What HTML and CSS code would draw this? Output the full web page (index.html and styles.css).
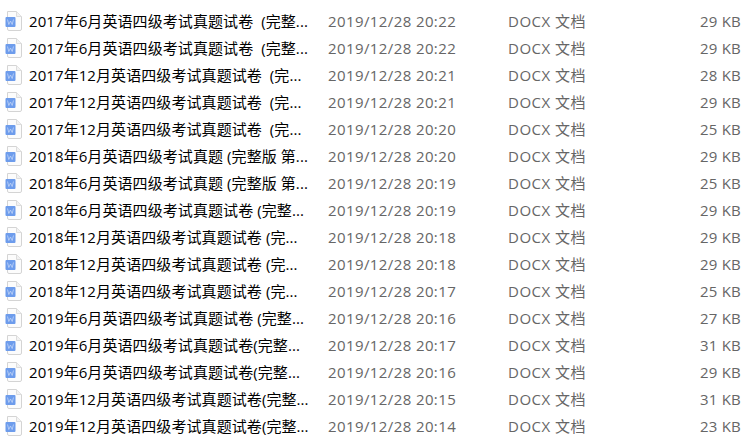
FILE: index.html
```html
<!DOCTYPE html>
<html lang="zh-CN">
    <head>
        <meta charset="UTF-8">
        <title>文件列表</title>
        <link rel="stylesheet" href="styles.css">
    </head>
    <body>
        <svg class="defs" width="0" height="0">
            <symbol id="doc" viewBox="0 0 17 20">
                <path d="M2.5 .5H11.5L16.5 5.5V18A1.5 1.5 0 0 1 15 19.5H4A1.5 1.5 0 0 1 2.5 18Z" fill="#fcfcfc" stroke="#d4d4d4"/>
                <path d="M11.5 .5V5.5H16.5" fill="#f2f2f2" stroke="#dddddd"/>
                <rect x="0.5" y="6" width="10" height="10" rx="1" fill="#6d9cec"/>
                <path d="M2.5 8.5L3.8 13.5L5.5 10L7.2 13.5L8.5 8.5" fill="none" stroke="#c3d6f7" stroke-width=".8"/>
            </symbol>
        </svg>
        <div class="list">
            <div class="row"><svg class="icon"><use href="#doc"/></svg><span class="name">2017年6月英语四级考试真题试卷&nbsp; (完整...</span><span class="date">2019/12/28 20:22</span><span class="type">DOCX 文档</span><span class="size">29 KB</span></div>
            <div class="row"><svg class="icon"><use href="#doc"/></svg><span class="name">2017年6月英语四级考试真题试卷&nbsp; (完整...</span><span class="date">2019/12/28 20:22</span><span class="type">DOCX 文档</span><span class="size">29 KB</span></div>
            <div class="row"><svg class="icon"><use href="#doc"/></svg><span class="name">2017年12月英语四级考试真题试卷&nbsp; (完...</span><span class="date">2019/12/28 20:21</span><span class="type">DOCX 文档</span><span class="size">28 KB</span></div>
            <div class="row"><svg class="icon"><use href="#doc"/></svg><span class="name">2017年12月英语四级考试真题试卷&nbsp; (完...</span><span class="date">2019/12/28 20:21</span><span class="type">DOCX 文档</span><span class="size">29 KB</span></div>
            <div class="row"><svg class="icon"><use href="#doc"/></svg><span class="name">2017年12月英语四级考试真题试卷&nbsp; (完...</span><span class="date">2019/12/28 20:20</span><span class="type">DOCX 文档</span><span class="size">25 KB</span></div>
            <div class="row"><svg class="icon"><use href="#doc"/></svg><span class="name">2018年6月英语四级考试真题 (完整版 第...</span><span class="date">2019/12/28 20:20</span><span class="type">DOCX 文档</span><span class="size">29 KB</span></div>
            <div class="row"><svg class="icon"><use href="#doc"/></svg><span class="name">2018年6月英语四级考试真题 (完整版 第...</span><span class="date">2019/12/28 20:19</span><span class="type">DOCX 文档</span><span class="size">25 KB</span></div>
            <div class="row"><svg class="icon"><use href="#doc"/></svg><span class="name">2018年6月英语四级考试真题试卷 (完整...</span><span class="date">2019/12/28 20:19</span><span class="type">DOCX 文档</span><span class="size">29 KB</span></div>
            <div class="row"><svg class="icon"><use href="#doc"/></svg><span class="name">2018年12月英语四级考试真题试卷 (完...</span><span class="date">2019/12/28 20:18</span><span class="type">DOCX 文档</span><span class="size">29 KB</span></div>
            <div class="row"><svg class="icon"><use href="#doc"/></svg><span class="name">2018年12月英语四级考试真题试卷 (完...</span><span class="date">2019/12/28 20:18</span><span class="type">DOCX 文档</span><span class="size">29 KB</span></div>
            <div class="row"><svg class="icon"><use href="#doc"/></svg><span class="name">2018年12月英语四级考试真题试卷 (完...</span><span class="date">2019/12/28 20:17</span><span class="type">DOCX 文档</span><span class="size">25 KB</span></div>
            <div class="row"><svg class="icon"><use href="#doc"/></svg><span class="name">2019年6月英语四级考试真题试卷 (完整...</span><span class="date">2019/12/28 20:16</span><span class="type">DOCX 文档</span><span class="size">27 KB</span></div>
            <div class="row"><svg class="icon"><use href="#doc"/></svg><span class="name">2019年6月英语四级考试真题试卷(完整...</span><span class="date">2019/12/28 20:17</span><span class="type">DOCX 文档</span><span class="size">31 KB</span></div>
            <div class="row"><svg class="icon"><use href="#doc"/></svg><span class="name">2019年6月英语四级考试真题试卷(完整...</span><span class="date">2019/12/28 20:16</span><span class="type">DOCX 文档</span><span class="size">29 KB</span></div>
            <div class="row"><svg class="icon"><use href="#doc"/></svg><span class="name">2019年12月英语四级考试真题试卷(完整...</span><span class="date">2019/12/28 20:15</span><span class="type">DOCX 文档</span><span class="size">31 KB</span></div>
            <div class="row"><svg class="icon"><use href="#doc"/></svg><span class="name">2019年12月英语四级考试真题试卷(完整...</span><span class="date">2019/12/28 20:14</span><span class="type">DOCX 文档</span><span class="size">23 KB</span></div>
        </div>
    </body>
</html>
```

FILE: styles.css
```css
*{
    margin: 0;
    padding: 0;
    box-sizing: border-box;
}
body{
    background-color: #ffffff;
    font-family: "Open Sans", "Noto Sans CJK SC", sans-serif;
    font-size: 15px;
    overflow: hidden;
}
.defs{
    display: block;
    height: 0;
}
.list{
    padding-top: 7px;
}
.row{
    display: flex;
    align-items: center;
    height: 27px;
    padding-left: 5px;
    white-space: nowrap;
}
.icon{
    width: 17px;
    height: 20px;
    flex: none;
}
.name{
    width: 299px;
    margin-left: 7px;
    letter-spacing: .08px;
    color: #000000;
}
.date{
    width: 180px;
    letter-spacing: .4px;
    color: #666666;
}
.type{
    width: 190px;
    letter-spacing: .5px;
    color: #666666;
}
.size{
    width: 43px;
    text-align: right;
    letter-spacing: .2px;
    color: #666666;
}
```
